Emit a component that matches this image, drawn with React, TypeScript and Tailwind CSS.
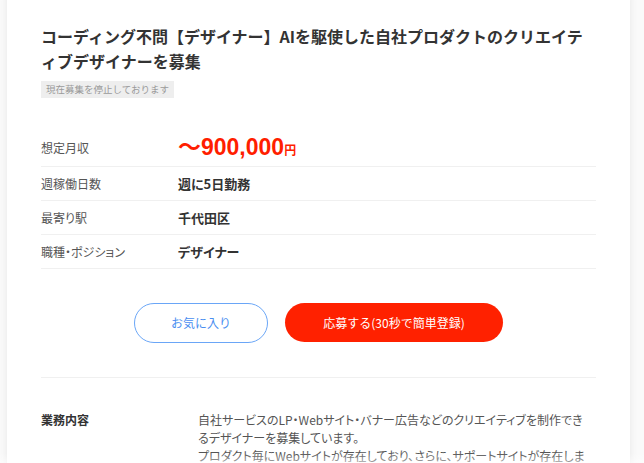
import React from 'react';

const font = { fontFamily: '"Noto Sans CJK JP", "Noto Sans", sans-serif' };

const rows = [
  { label: '週稼働日数', value: '週に5日勤務' },
  { label: '最寄り駅', value: '千代田区' },
  { label: '職種・ポジション', value: 'デザイナー' },
];

export default function App() {
  return (
    <div className="relative h-[463px] overflow-hidden bg-[#fafafa]" style={font}>
      {/* Job card */}
      <div className="-mt-3 ml-[7px] w-[623px] rounded-lg bg-white px-[34px] pt-[36px] pb-10 shadow-[0_0_8px_rgba(0,0,0,0.08)]">
        {/* Title */}
        <h1 className="text-[16px] leading-[25px] font-bold text-[#333]">
          コーディング不問【デザイナー】AIを駆使した自社プロダクトのクリエイティブデザイナーを募集
        </h1>
        <div className="mt-[3px] inline-flex h-[17px] items-center bg-[#eeeeee] px-[5px] text-[9.5px] text-[#9a9a9a]">
          現在募集を停止しております
        </div>

        {/* Summary table */}
        <div className="mt-[31px] [font-feature-settings:'palt']">
          <div className="flex h-[38px] items-center border-b border-[#f0f0f0]">
            <div className="w-[137px] text-[12px] text-[#555]">想定月収</div>
            <div className="flex items-baseline font-bold text-[#ff1e00]">
              <span className="text-[23px] leading-none" style={{ fontFamily: '"Liberation Sans", "Noto Sans CJK JP", sans-serif' }}>
                〜900,000
              </span>
              <span className="text-[12px]">円</span>
            </div>
          </div>
          {rows.map((r) => (
            <div key={r.label} className="flex h-[34px] items-center border-b border-[#f0f0f0]">
              <div className="w-[137px] text-[12px] text-[#555]">{r.label}</div>
              <div className="text-[13px] font-bold text-[#333]">{r.value}</div>
            </div>
          ))}
        </div>

        {/* Actions */}
        <div className="flex justify-center gap-[17px] pt-[34px] pb-[34px] border-b border-[#f0f0f0]">
          <button className="h-[40px] w-[134px] rounded-full border border-[#6aa6f7] bg-white text-[12px] text-[#4a8ef0]">
            お気に入り
          </button>
          <button className="h-[39px] w-[218px] rounded-full bg-[#ff2100] text-[12px] text-white">
            応募する(30秒で簡単登録)
          </button>
        </div>

        {/* Description */}
        <div className="flex pt-[33px]">
          <div className="w-[157px] shrink-0 text-[12px] leading-[18px] font-bold text-[#333]">業務内容</div>
          <div className="text-[12px] leading-[18px] text-[#555] [font-feature-settings:'palt']">
            <p>
              自社サービスのLP・Webサイト・バナー広告などのクリエイティブを制作でき
              <br />
              るデザイナーを募集しています。
            </p>
            <p>
              プロダクト毎にWebサイトが存在しており、さらに、サポートサイトが存在しま
              <br />
              す。
            </p>
          </div>
        </div>
      </div>

      {/* bottom fade */}
      <div className="pointer-events-none absolute inset-x-0 bottom-0 h-[10px] bg-gradient-to-b from-white/0 to-white/50" />
    </div>
  );
}
